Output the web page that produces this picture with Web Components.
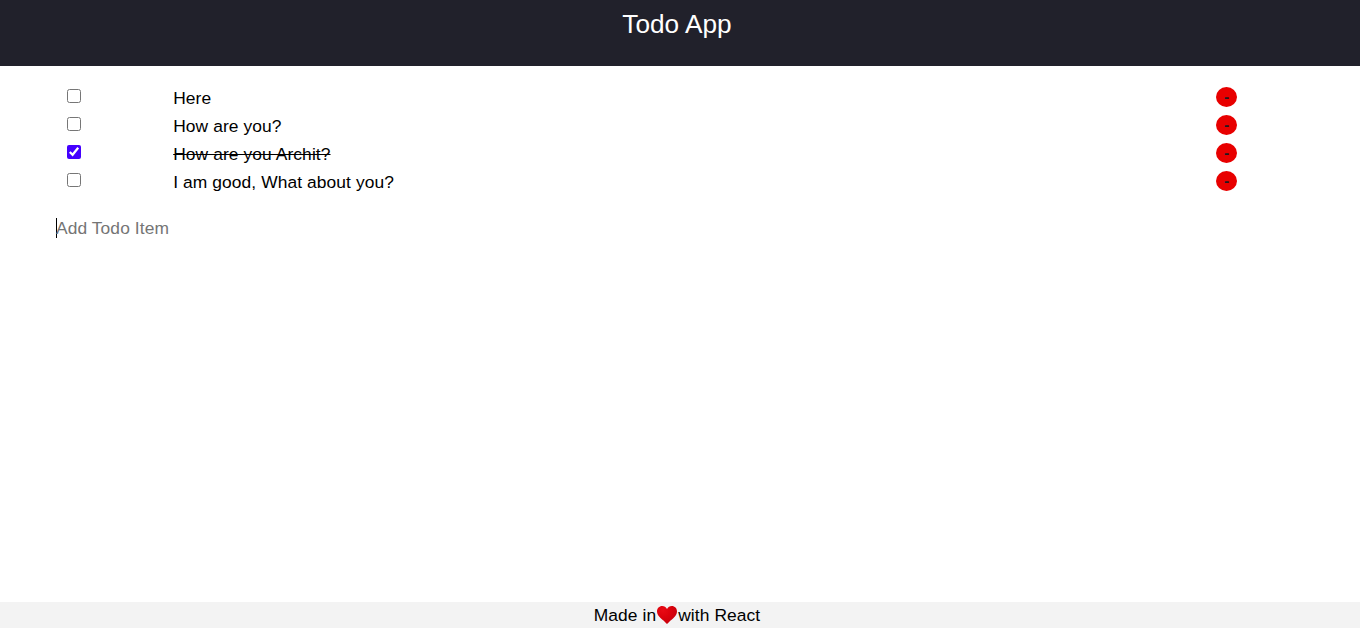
<!DOCTYPE html>
<html lang="en">
<head>
<meta charset="utf-8">
<title>Todo App</title>
<style>
html,body{margin:0;height:100%;background:#fff}
body{font:17.4px/20px "Liberation Sans",Arial,sans-serif;letter-spacing:.09px;color:#000;overflow:hidden}
</style>
</head>
<body>
<todo-app></todo-app>
<script>
class Base extends HTMLElement{
  constructor(){super();this.attachShadow({mode:'open'}).innerHTML=this.render();}
  render(){return '';}
}
customElements.define('app-header',class extends Base{
  render(){return `<style>
    :host{display:block;box-sizing:border-box;height:66px;padding:9px 6px 0 0;background:#21212b;color:#fff;text-align:center;font-size:26.2px;line-height:30px;letter-spacing:.03px}
    </style><slot></slot>`;}
});
customElements.define('todo-item',class extends Base{
  render(){return `<style>
    :host{display:grid;grid-template-columns:117.2px 1fr 21px;height:28px;align-items:start}
    input{width:14px;height:14px;margin:3px 0 0 11px;accent-color:#4400ff}
    span{padding-top:2px}
    :host([done]) span{text-decoration:line-through}
    button{width:21px;height:20px;margin:1px 0 0;padding:0;border:0;border-radius:50%;background:#e80000;color:#1c1c22;font:bold 15.5px/20px "Liberation Sans",Arial,sans-serif}
    </style><input type="checkbox"><span><slot></slot></span><button>-</button>`;}
  connectedCallback(){this.shadowRoot.querySelector('input').checked=this.hasAttribute('done');}
});
customElements.define('todo-input',class extends Base{
  render(){return `<style>
    :host{display:flex;height:20px;color:#757575}
    i{width:1px;height:20px;background:#000;margin-right:-1px}
    </style><i></i><span><slot></slot></span>`;}
});
customElements.define('heart-icon',class extends Base{
  render(){return `<style>:host{display:block;width:22px;height:20px}svg{display:block}</style>
    <svg width="22" height="20" viewBox="0 0 22 20"><defs><radialGradient id="g" cx=".3" cy=".25" r=".85"><stop offset="0" stop-color="#e90a14"/><stop offset=".45" stop-color="#dc020c"/><stop offset="1" stop-color="#c4000b"/></radialGradient></defs>
    <path fill="url(#g)" d="M11 4.100C10 2 8.300 1 6.200 1C3.200 1 1 3.300 1 6.500C1 11.500 7 14.500 11 19C15 14.500 21 11.500 21 6.500C21 3.300 18.800 1 15.800 1C13.700 1 12 2 11 4.100Z"/></svg>`;}
});
customElements.define('app-footer',class extends Base{
  render(){return `<style>
    :host{display:flex;box-sizing:border-box;justify-content:center;height:26px;padding:3px 6px 0 0;background:#f3f3f3}
    </style><slot></slot>`;}
});
customElements.define('todo-app',class extends Base{
  render(){return `<style>
    :host{display:flex;flex-direction:column;height:100vh}
    main{flex:1;padding:20px 123px 0 56px}
    todo-input{margin-top:20px}
    </style>
    <app-header>Todo App</app-header>
    <main>
      <todo-item>Here</todo-item>
      <todo-item>How are you?</todo-item>
      <todo-item done>How are you Archit?</todo-item>
      <todo-item>I am good, What about you?</todo-item>
      <todo-input>Add Todo Item</todo-input>
    </main>
    <app-footer><span>Made in</span><heart-icon></heart-icon><span>with React</span></app-footer>`;}
});
</script>
</body>
</html>
